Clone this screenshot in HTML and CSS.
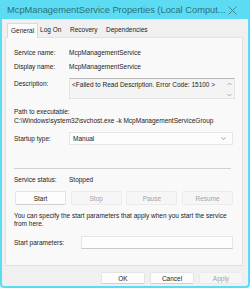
FILE: index.html
```html
<!DOCTYPE html>
<html>
<head>
<meta charset="utf-8">
<link rel="stylesheet" href="styles.css">
</head>
<body>
<div class="window">
  <div class="titlebar">
    <span class="title">McpManagementService Properties (Local Comput...</span>
    <svg class="close" width="9" height="9" viewBox="0 0 9 9"><path d="M0.5 0.5 L8.5 8.5 M8.5 0.5 L0.5 8.5" stroke="#3d7f8a" stroke-width="0.9" fill="none"/></svg>
  </div>
  <div class="body">
    <div class="tabs">
      <div class="tab selected">General</div>
      <div class="tab">Log On</div>
      <div class="tab">Recovery</div>
      <div class="tab">Dependencies</div>
    </div>
    <div class="panel">
      <div class="row r1"><span class="label">Service name:</span><span class="value">McpManagementService</span></div>
      <div class="row r2"><span class="label">Display name:</span><span class="value">McpManagementService</span></div>
      <div class="row desc-row">
        <span class="label desc-label">Description:</span>
        <div class="desc">
          <span class="desc-text">&lt;Failed to Read Description. Error Code: 15100 &gt;</span>
          <div class="scroll">
            <svg width="5" height="4" viewBox="0 0 5 4"><path d="M0.5 3 L2.5 1 L4.5 3" stroke="#9a9a9a" stroke-width="0.8" fill="none"/></svg>
            <svg width="5" height="4" viewBox="0 0 5 4"><path d="M0.5 1 L2.5 3 L4.5 1" stroke="#9a9a9a" stroke-width="0.8" fill="none"/></svg>
          </div>
        </div>
      </div>
      <div class="path-label">Path to executable:</div>
      <div class="path">C:\Windows\system32\svchost.exe -k McpManagementServiceGroup</div>
      <div class="row startup-row">
        <span class="label">Startup type:</span>
        <div class="select">
          <span>Manual</span>
          <svg width="5" height="3" viewBox="0 0 5 3"><path d="M0.5 0.5 L2.5 2.5 L4.5 0.5" stroke="#777" stroke-width="0.7" fill="none"/></svg>
        </div>
      </div>
      <div class="sep"></div>
      <div class="row status-row"><span class="label">Service status:</span><span class="value">Stopped</span></div>
      <div class="btn-row">
        <div class="btn">Start</div>
        <div class="btn disabled">Stop</div>
        <div class="btn disabled">Pause</div>
        <div class="btn disabled">Resume</div>
      </div>
      <p class="hint">You can specify the start parameters that apply when you start the service from here.</p>
      <div class="row params-row">
        <span class="label params-label">Start parameters:</span>
        <div class="input"></div>
      </div>
    </div>
    <div class="footer">
      <div class="btn fbtn">OK</div>
      <div class="btn fbtn">Cancel</div>
      <div class="btn fbtn disabled">Apply</div>
    </div>
  </div>
</div>
</body>
</html>
```

FILE: styles.css
```css
* { box-sizing: border-box; }
html, body { margin: 0; padding: 0; background: #ffffff; }
body {
  width: 250px;
  height: 289px;
  font-family: "Liberation Sans", Arial, sans-serif;
  font-size: 6.5px;
  color: #1b1b1b;
}
.window {
  width: 250px;
  height: 288px;
  border: 2px solid #5cdcf3;
  border-top: 0;
  border-right-width: 2px;
  border-radius: 0 0 4px 4px;
  background: #f0f0f0;
  display: flex;
  flex-direction: column;
  overflow: hidden;
}
.titlebar {
  height: 19px;
  background: #5cdcf3;
  display: flex;
  align-items: center;
  justify-content: space-between;
  padding: 1px 11px 0 5px;
}
.title {
  font-size: 9.3px;
  color: #2f6f7a;
  white-space: nowrap;
}
.close { display: block; }
.body {
  flex: 1;
  display: flex;
  flex-direction: column;
  padding: 4px 3px 0 3px;
}
.tabs {
  display: flex;
  height: 14px;
  align-items: flex-end;
  padding-left: 2px;
}
.tab {
  padding: 0 4.3px;
  height: 13px;
  line-height: 12px;
  color: #1b1b1b;
}
.tab.selected {
  position: relative;
  z-index: 1;
  height: 15px;
  line-height: 14px;
  padding: 0 3px;
  margin-right: -2.4px;
  margin-bottom: -1px;
  background: #fbfbfb;
  border: 1px solid #dadada;
  border-bottom: 0;
}
.panel {
  width: 238px;
  height: 229px;
  background: #f9f9f9;
  border: 1px solid #e2e2e2;
  padding: 9px 0 0 8px;
  display: flex;
  flex-direction: column;
}
.row {
  display: flex;
  align-items: center;
}
.label {
  width: 55px;
  flex: none;
}
.r1 { height: 10px; }
.r2 { height: 10px; margin-top: 4px; }
.desc-row { margin-top: 7px; align-items: flex-start; }
.desc-label { padding-top: 2px; }
.desc {
  width: 166px;
  height: 21px;
  background: #f4f4f4;
  border: 1px solid #e3e3e3;
  border-top-color: #b9b9b9;
  display: flex;
  justify-content: space-between;
  padding: 2px 2px 0 2px;
}
.desc-text { line-height: 8px; }
.scroll {
  display: flex;
  flex-direction: column;
  justify-content: space-between;
  height: 16px;
  padding: 1px 0 0 0;
}
.scroll svg { display: block; }
.path-label { margin-top: 8px; line-height: 9px; }
.path { line-height: 9px; }
.startup-row { margin-top: 7px; }
.select {
  width: 164px;
  height: 13px;
  background: #fdfdfd;
  border: 1px solid #e6e6e6;
  display: flex;
  align-items: center;
  justify-content: space-between;
  padding: 0 6px 0 3px;
}
.select svg { display: block; }
.sep {
  margin-top: 23px;
  width: 217px;
  height: 1px;
  background: #cfcfcf;
}
.status-row { margin-top: 5px; height: 10px; }
.btn-row {
  margin-top: 7px;
  display: flex;
  gap: 4.7px;
  padding-left: 1px;
}
.btn {
  width: 51px;
  height: 14px;
  background: #fdfdfd;
  border: 1px solid #e4e4e4;
  border-bottom-color: #d0d0d0;
  border-radius: 1.5px;
  display: flex;
  align-items: center;
  justify-content: center;
  color: #1b1b1b;
}
.btn.disabled {
  background: #f6f6f6;
  border-color: #ebebeb;
  color: #a3a3a3;
}
.hint {
  margin: 7px 0 0 0;
  width: 218px;
  line-height: 8px;
}
.params-row { margin-top: 8px; }
.params-label { width: 67px; }
.input {
  width: 152px;
  height: 13px;
  background: #fdfdfd;
  border: 1px solid #e6e6e6;
  border-bottom-color: #c9c9c9;
}
.footer {
  display: flex;
  justify-content: flex-end;
  gap: 5px;
  padding: 6px 2px 0 0;
}
.fbtn { width: 44px; height: 12px; }
```
